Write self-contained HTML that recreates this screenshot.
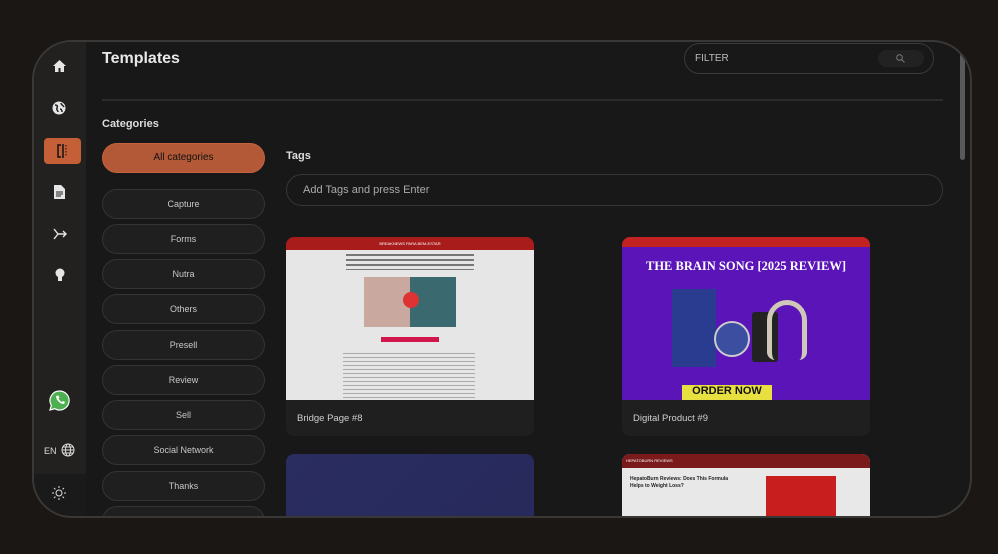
<!DOCTYPE html><html><head><style>
*{box-sizing:border-box;margin:0;padding:0}
html,body{width:998px;height:554px;overflow:hidden}
body{background:#1b1715;font-family:"Liberation Sans",sans-serif;position:relative}
.frame{position:absolute;left:32px;top:40px;width:940px;height:478px;border-radius:40px;background:#181818;border:2px solid #3a3836;overflow:hidden}
.in{position:absolute;left:-2px;top:-2px;width:940px;height:478px}
.side{position:absolute;left:0;top:0;width:54px;height:100%;background:#222120}
.side .bot{position:absolute;left:0;bottom:0;width:54px;height:44px;background:#1a1a1a}
.abs{position:absolute}
h1{position:absolute;left:70px;top:10px;font-size:16px;font-weight:bold;color:#e8e8e8}
.cat{position:absolute;left:70px;width:163px;height:30px;border:1px solid #343434;border-radius:15px;background:#1f1f1f;color:#c8c8c8;font-size:9px;text-align:center;line-height:28px}
.card{position:absolute;width:248px;height:199px;border-radius:8px;background:#1f1f1f;overflow:hidden}
.card .cap{position:absolute;left:11px;top:176px;color:#cfcfcf;font-size:9.5px}
</style></head><body>
<div class="frame"><div class="in">
<div class="side">
 <svg class="abs" style="left:21px;top:20px" width="13" height="12" viewBox="0 0 13 12"><path d="M6.5 0L0 6h2v6h3.5V8h2v4H11V6h2z" fill="#e6e6e6"/></svg>
 <svg class="abs" style="left:20px;top:61px" width="14" height="14" viewBox="0 0 14 14"><circle cx="7" cy="7" r="6.5" fill="#e6e6e6"/><path d="M3 4c2 0 3 1 2 3s1 2 1 4M9 2c0 2 2 2 3 4M8 8c1 0 2 1 2 3" stroke="#222" stroke-width="1.5" fill="none"/></svg>
 <div class="abs" style="left:12px;top:98px;width:37px;height:26px;background:#c45f38;border-radius:4px"></div>
 <svg class="abs" style="left:24px;top:104px" width="14" height="14" viewBox="0 0 14 14"><path d="M5 1H2v12h3M7 0v14" stroke="#111" stroke-width="1.5" fill="none"/><path d="M10 1v12" stroke="#111" stroke-dasharray="1.5 1.5" fill="none"/></svg>
 <svg class="abs" style="left:22px;top:145px" width="11" height="14" viewBox="0 0 11 14"><path d="M0 0h7l4 4v10H0z" fill="#e6e6e6"/><path d="M2 7h7M2 9h7M2 11h5" stroke="#222"/></svg>
 <svg class="abs" style="left:21px;top:187px" width="14" height="14" viewBox="0 0 14 14"><path d="M1 2l4 5-4 5M5 7h8M10 4l3 3-3 3" stroke="#e6e6e6" stroke-width="1.4" fill="none"/></svg>
 <svg class="abs" style="left:23px;top:228px" width="10" height="14" viewBox="0 0 10 14"><circle cx="5" cy="5" r="4.5" fill="#e6e6e6"/><rect x="3" y="9" width="4" height="4" fill="#e6e6e6"/></svg>
 <svg class="abs" style="left:17px;top:350px" width="21" height="21" viewBox="0 0 21 21"><path d="M10.5 1a9.5 9.5 0 0 0-8.2 14.3L1 20l4.8-1.3A9.5 9.5 0 1 0 10.5 1z" fill="#4caf50" stroke="#fff" stroke-width="1.2"/><path d="M7 6c0 4 4 8 8 8l1-2-2-1-1 1c-1-.5-3-2-3.5-3.5l1-1-1-2z" fill="#fff"/></svg>
 <div class="abs" style="left:12px;top:406px;color:#ddd;font-size:9px">EN</div>
 <svg class="abs" style="left:29px;top:403px" width="14" height="14" viewBox="0 0 14 14" fill="none" stroke="#ddd"><circle cx="7" cy="7" r="6"/><ellipse cx="7" cy="7" rx="2.5" ry="6"/><path d="M1 7h12M2 4h10M2 10h10"/></svg>
 <div class="bot"></div>
 <svg class="abs" style="left:20px;top:446px" width="14" height="14" viewBox="0 0 14 14" fill="none" stroke="#ddd"><circle cx="7" cy="7" r="3"/><path d="M7 0v2M7 12v2M0 7h2M12 7h2M2 2l1.4 1.4M10.6 10.6L12 12M2 12l1.4-1.4M10.6 3.4L12 2"/></svg>
</div>
<h1>Templates</h1>
<div class="abs" style="left:652px;top:3px;width:250px;height:31px;border:1px solid #3a3a3a;border-radius:16px;color:#bbb;font-size:10px;line-height:29px;padding-left:10px">FILTER
 <div class="abs" style="left:193px;top:6px;width:46px;height:17px;background:#222;border-radius:9px"></div>
 <svg class="abs" style="left:211px;top:10px" width="9" height="9" viewBox="0 0 9 9" fill="none" stroke="#777"><circle cx="3.5" cy="3.5" r="2.8"/><path d="M5.5 5.5L8.5 8.5"/></svg>
</div>
<div class="abs" style="left:928px;top:10px;width:5px;height:110px;background:#5a5a5a;border-radius:3px"></div>
<div class="abs" style="left:70px;top:59px;width:841px;height:2px;background:#2c2c2c"></div>
<div class="abs" style="left:70px;top:78px;color:#ddd;font-size:11px;font-weight:bold">Categories</div>
<div class="cat" style="top:103px;background:#b35937;border-color:#c4633d;color:#111;font-size:10px">All categories</div>
<div class="cat" style="top:149px">Capture</div>
<div class="cat" style="top:184px">Forms</div>
<div class="cat" style="top:219px">Nutra</div>
<div class="cat" style="top:254px">Others</div>
<div class="cat" style="top:290px">Presell</div>
<div class="cat" style="top:325px">Review</div>
<div class="cat" style="top:360px">Sell</div>
<div class="cat" style="top:395px">Social Network</div>
<div class="cat" style="top:431px">Thanks</div>
<div class="cat" style="top:466px"></div>
<div class="abs" style="left:254px;top:110px;color:#ddd;font-size:11px;font-weight:bold">Tags</div>
<div class="abs" style="left:254px;top:134px;width:657px;height:32px;border:1px solid #363636;border-radius:16px;color:#aaa;font-size:11px;line-height:30px;padding-left:16px">Add Tags and press Enter</div>
<div class="card" style="left:254px;top:197px">
 <div class="abs" style="left:0;top:0;width:248px;height:13px;background:#a81c1c;color:#fff;font-size:4px;text-align:center;line-height:13px">BREAKNEWS PARA BEM-ESTAR</div>
 <div class="abs" style="left:0;top:13px;width:248px;height:150px;background:#e6e6e6"></div>
 <div class="abs" style="left:60px;top:17px;width:128px;height:16px;background:repeating-linear-gradient(#777 0 2px,transparent 2px 5px)"></div>
 <div class="abs" style="left:78px;top:40px;width:92px;height:50px;background:linear-gradient(90deg,#c9a8a0 50%,#3a6a70 50%)"></div>
 <div class="abs" style="left:117px;top:55px;width:16px;height:16px;border-radius:50%;background:#d33"></div>
 <div class="abs" style="left:95px;top:100px;width:58px;height:5px;background:#d0164a"></div>
 <div class="abs" style="left:57px;top:116px;width:132px;height:45px;background:repeating-linear-gradient(#aaa 0 1px,transparent 1px 4px)"></div>
 <div class="cap">Bridge Page #8</div>
</div>
<div class="card" style="left:590px;top:197px">
 <div class="abs" style="left:0;top:0;width:248px;height:10px;background:#c32222"></div>
 <div class="abs" style="left:0;top:10px;width:248px;height:153px;background:#5a14b8"></div>
 <div class="abs" style="left:0;top:22px;width:248px;text-align:center;color:#fff;font-family:'Liberation Serif',serif;font-weight:bold;font-size:12.5px">THE BRAIN SONG [2025 REVIEW]</div>
 <div class="abs" style="left:50px;top:52px;width:44px;height:78px;background:#2a3c90"></div>
 <div class="abs" style="left:92px;top:84px;width:36px;height:36px;border-radius:50%;background:#3b4ea0;border:2px solid #ccc"></div>
 <div class="abs" style="left:130px;top:75px;width:26px;height:50px;background:#222;border-radius:3px"></div>
 <div class="abs" style="left:145px;top:63px;width:40px;height:60px;border:5px solid #cfc8b8;border-radius:20px 20px 8px 8px;border-bottom:none"></div>
 <div class="abs" style="left:60px;top:148px;width:90px;height:15px;background:#e8e040;color:#111;font-weight:bold;font-size:11px;text-align:center">ORDER NOW</div>
 <div class="cap">Digital Product #9</div>
</div>
<div class="card" style="left:254px;top:414px;background:linear-gradient(135deg,#2a2d60,#26285a)"></div>
<div class="card" style="left:590px;top:414px;background:#e8e8e8">
 <div class="abs" style="left:0;top:0;width:248px;height:14px;background:#7a1a1a;color:#fff;font-size:4px;line-height:14px;padding-left:4px">HEPATOBURN REVIEWS</div>
 <div class="abs" style="left:8px;top:22px;width:110px;color:#222;font-weight:bold;font-size:5px;line-height:7px">HepatoBurn Reviews: Does This Formula Helps to Weight Loss?</div>
 <div class="abs" style="left:144px;top:22px;width:70px;height:50px;background:#c81e1e"></div>
</div>
</div></div>
</body></html>
